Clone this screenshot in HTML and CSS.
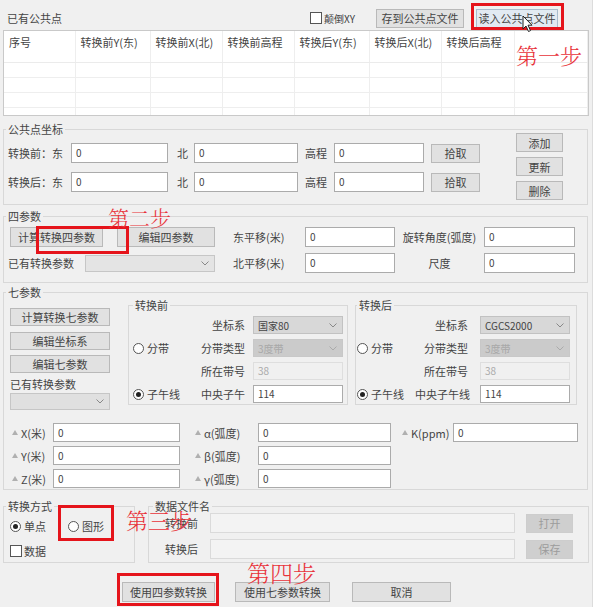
FILE: index.html
```html
<!DOCTYPE html>
<html lang="zh">
<head>
<meta charset="utf-8">
<title>坐标转换</title>
<link rel="stylesheet" href="styles.css">
</head>
<body>
<div class="dlg">
  <div class="topbar">
    <span class="ttl">已有公共点</span>
    <span class="chk"><span class="cbox"></span>颠倒XY</span>
    <span class="btn b-save">存到公共点文件</span>
    <span class="btn b-load">读入公共点文件</span>
  </div>
  <div class="tblwrap">
    <table class="pts">
      <colgroup><col class="c71"><col class="c75"><col class="c72"><col class="c72"><col class="c75"><col class="c72"><col class="c73"><col></colgroup>
      <thead><tr><th>序号</th><th>转换前Y(东)</th><th>转换前X(北)</th><th>转换前高程</th><th>转换后Y(东)</th><th>转换后X(北)</th><th>转换后高程</th><th></th></tr></thead>
      <tbody>
        <tr><td></td><td></td><td></td><td></td><td></td><td></td><td></td><td></td></tr>
        <tr><td></td><td></td><td></td><td></td><td></td><td></td><td></td><td></td></tr>
        <tr><td></td><td></td><td></td><td></td><td></td><td></td><td></td><td></td></tr>
        <tr><td></td><td></td><td></td><td></td><td></td><td></td><td></td><td></td></tr>
      </tbody>
    </table>
  </div>

  <div class="grp g1">
    <div class="gt">公共点坐标</div>
    <div class="gb gb1">
      <div class="rows">
        <div class="row">
          <span class="l1">转换前：东</span><span class="inp w97">0</span>
          <span class="l2">北</span><span class="inp w104">0</span>
          <span class="l3">高程</span><span class="inp w90">0</span>
          <span class="btn pick">拾取</span>
        </div>
        <div class="row">
          <span class="l1">转换后：东</span><span class="inp w97">0</span>
          <span class="l2">北</span><span class="inp w104">0</span>
          <span class="l3">高程</span><span class="inp w90">0</span>
          <span class="btn pick">拾取</span>
        </div>
      </div>
      <div class="rcol">
        <span class="btn sbtn">添加</span>
        <span class="btn sbtn">更新</span>
        <span class="btn sbtn">删除</span>
      </div>
    </div>
  </div>

  <div class="grp g2">
    <div class="gt">四参数</div>
    <div class="gb gb2">
      <div class="pair">
        <span class="btn calc4">计算转换四参数</span>
        <span class="btn edit4">编辑四参数</span>
      </div>
      <span class="lp">东平移(米)</span>
      <span class="inp">0</span>
      <span class="lc">旋转角度(弧度)</span>
      <span class="inp">0</span>
      <div class="pair">
        <span class="lsel">已有转换参数</span>
        <span class="sel sel4"><span></span><svg width="8" height="5" viewBox="0 0 8 5"><path d="M0.5 0.5L4 4L7.5 0.5" fill="none" stroke="#888"/></svg></span>
      </div>
      <span class="lp">北平移(米)</span>
      <span class="inp">0</span>
      <span class="lc">尺度</span>
      <span class="inp">0</span>
    </div>
  </div>

  <div class="grp g3">
    <div class="gt">七参数</div>
    <div class="gb gb3">
      <div class="top">
        <div class="lcol">
          <span class="btn b7 first">计算转换七参数</span>
          <span class="btn b7 second">编辑坐标系</span>
          <span class="btn b7 third">编辑七参数</span>
          <span class="lbl7">已有转换参数</span>
          <span class="sel sel7"><span></span><svg width="8" height="5" viewBox="0 0 8 5"><path d="M0.5 0.5L4 4L7.5 0.5" fill="none" stroke="#888"/></svg></span>
        </div>
        <div class="sub s1">
          <div class="gt">转换前</div>
          <div class="gb sb sb1">
            <span></span><span class="sl">坐标系</span>
            <span class="sel cs"><span>国家80</span><svg width="8" height="5" viewBox="0 0 8 5"><path d="M0.5 0.5L4 4L7.5 0.5" fill="none" stroke="#888"/></svg></span>
            <span class="ropt"><span class="radio"></span>分带</span><span class="sl">分带类型</span>
            <span class="sel cs dis"><span>3度带</span><svg width="8" height="5" viewBox="0 0 8 5"><path d="M0.5 0.5L4 4L7.5 0.5" fill="none" stroke="#aaa"/></svg></span>
            <span></span><span class="sl">所在带号</span>
            <span class="inp dis">38</span>
            <span class="ropt"><span class="radio on"></span>子午线</span><span class="sl">中央子午</span>
            <span class="inp">114</span>
          </div>
        </div>
        <div class="sub s2">
          <div class="gt">转换后</div>
          <div class="gb sb sb2">
            <span></span><span class="sl">坐标系</span>
            <span class="sel cs"><span>CGCS2000</span><svg width="8" height="5" viewBox="0 0 8 5"><path d="M0.5 0.5L4 4L7.5 0.5" fill="none" stroke="#888"/></svg></span>
            <span class="ropt"><span class="radio"></span>分带</span><span class="sl">分带类型</span>
            <span class="sel cs dis"><span>3度带</span><svg width="8" height="5" viewBox="0 0 8 5"><path d="M0.5 0.5L4 4L7.5 0.5" fill="none" stroke="#aaa"/></svg></span>
            <span></span><span class="sl">所在带号</span>
            <span class="inp dis">38</span>
            <span class="ropt"><span class="radio on"></span>子午线</span><span class="sl">中央子午线</span>
            <span class="inp">114</span>
          </div>
        </div>
      </div>
      <div class="prm">
        <span class="pl p1"><span class="tri"></span>X(米)</span><span class="inp">0</span>
        <span class="pl p2"><span class="tri"></span>α(弧度)</span><span class="inp">0</span>
        <span class="pl p3"><span class="tri"></span>K(ppm)</span><span class="inp">0</span>
        <span class="pl p1"><span class="tri"></span>Y(米)</span><span class="inp">0</span>
        <span class="pl p2"><span class="tri"></span>β(弧度)</span><span class="inp">0</span>
        <span></span><span></span>
        <span class="pl p1"><span class="tri"></span>Z(米)</span><span class="inp">0</span>
        <span class="pl p2"><span class="tri"></span>γ(弧度)</span><span class="inp">0</span>
        <span></span><span></span>
      </div>
    </div>
  </div>

  <div class="row4">
    <div class="grp g4a">
      <div class="gt">转换方式</div>
      <div class="gb gb4a">
        <div class="mrow">
          <span class="ropt"><span class="radio on"></span>单点</span>
          <span class="ropt r2"><span class="radio"></span>图形</span>
        </div>
        <div class="crow"><span class="cbox"></span>数据</div>
      </div>
    </div>
    <div class="grp g4b">
      <div class="gt">数据文件名</div>
      <div class="gb gb4b">
        <span class="fl">转换前</span><span class="inp dis2"></span><span></span><span class="btn dis fbtn">打开</span>
        <span class="fl">转换后</span><span class="inp dis2"></span><span></span><span class="btn dis fbtn">保存</span>
      </div>
    </div>
  </div>

  <div class="bottom">
    <span class="btn bb1">使用四参数转换</span>
    <span class="btn bb2">使用七参数转换</span>
    <span class="btn bb3">取消</span>
  </div>

  <div class="rbox r1"></div>
  <div class="rbox r2"></div>
  <div class="rbox r3"></div>
  <div class="rbox r4"></div>
  <div class="ann a1">第一步</div>
  <div class="ann a2">第二步</div>
  <div class="ann a3">第三步</div>
  <div class="ann a4">第四步</div>
  <svg class="cursor" width="12" height="18" viewBox="0 0 12 18"><path d="M1 1L1 14L4 11L6.5 16.5L8.5 15.6L6 10.2L10 10.2Z" fill="#fff" stroke="#222" stroke-width="1" stroke-linejoin="round"/></svg>
</div>
</body>
</html>
```

FILE: styles.css
```css
* { box-sizing: border-box; }
html, body { margin: 0; padding: 0; }
body {
  background: #fff;
  width: 600px;
  height: 612px;
  overflow: hidden;
  font-family: "Noto Sans CJK SC", "Microsoft YaHei", "Noto Sans", sans-serif;
  font-size: 11px;
  color: #444;
}
.dlg {
  position: relative;
  width: 593px;
  height: 607px;
  background: #f0f0f0;
  border-right: 1px solid #dcdcdc;
}

/* generic controls */
.btn {
  display: inline-flex;
  align-items: center;
  justify-content: center;
  height: 19px;
  background: #e1e1e1;
  border: 1px solid #b9b9b9;
  color: #444;
  font-size: 11px;
  white-space: nowrap;
  flex: none;
}
.btn.dis { background: #cfcfcf; border-color: #cdcdcd; color: #9c9c9c; }
.inp {
  display: block;
  height: 20px;
  background: #fff;
  border: 1px solid #ababab;
  padding: 2px 4px 0;
  font-size: 10px;
  line-height: 13px;
  color: #444;
  flex: none;
}
.inp.dis { background: #f0f0f0; border-color: #dedede; color: #aaa; }
.inp.dis2 { background: #f3f3f3; border-color: #dadada; }
.sel {
  display: flex;
  align-items: center;
  justify-content: space-between;
  height: 17px;
  padding: 0 5px 0 4px;
  background: #e4e4e4;
  border: 1px solid #c6c6c6;
  font-size: 10px;
  color: #444;
}
.radio {
  display: inline-block;
  position: relative;
  width: 11px;
  height: 11px;
  border: 1px solid #555;
  border-radius: 50%;
  background: #fff;
  flex: none;
}
.radio.on::after {
  content: "";
  position: absolute;
  left: 2px; top: 2px; right: 2px; bottom: 2px;
  border-radius: 50%;
  background: #222;
}
.cbox {
  display: inline-block;
  width: 12px;
  height: 12px;
  border: 1px solid #555;
  background: #fff;
  flex: none;
}
.ropt { display: flex; align-items: center; gap: 3px; white-space: nowrap; }

/* top bar */
.topbar {
  display: flex;
  align-items: center;
  height: 30px;
  padding-top: 6px;
}
.ttl { margin-left: 7px; }
.chk { margin-left: auto; display: flex; align-items: center; gap: 2px; font-size: 10px; }
.b-save { margin-left: 21px; width: 88px; }
.b-load { margin-left: 12px; width: 82px; margin-right: 34px; background: #e2eaf2; border-color: #a9bccd; }

/* table */
.tblwrap {
  margin-left: 3px;
  width: 586px;
  height: 86px;
  background: #fff;
  border: 1px solid #c9c9c9;
  overflow: hidden;
}
.pts { width: 100%; border-collapse: collapse; table-layout: fixed; }
.c71 { width: 71px; } .c72 { width: 72px; } .c73 { width: 73px; } .c75 { width: 75px; }
.pts th {
  height: 31px;
  padding: 3px 0 0 5px;
  text-align: left;
  vertical-align: top;
  font-weight: normal;
  font-size: 11px;
  color: #444;
  white-space: nowrap;
  overflow: hidden;
  border-right: 1px solid #eeeeee;
  border-bottom: 1px solid #ebebeb;
}
.pts td { height: 15px; padding: 0; border-right: 1px solid #eeeeee; border-bottom: 1px solid #eeeeee; }

/* group boxes */
.grp { margin-left: 3px; }
.gt {
  display: table;
  position: relative;
  margin: 0 0 -7px 3px;
  padding: 0 2px;
  line-height: 14px;
  background: #f0f0f0;
  white-space: nowrap;
}
.gb { border: 1px solid #d8d8d8; }

.g1 { margin-top: 6px; }
.gb1 { width: 585px; height: 76px; padding: 3px 24px 0 4px; display: flex; }
.rows { margin-top: 10px; display: flex; flex-direction: column; gap: 9px; }
.row { display: flex; align-items: center; height: 20px; }
.l1 { width: 63px; }
.l2 { width: 26px; padding-left: 9px; }
.l3 { width: 36px; padding-left: 7px; }
.w97 { width: 97px; } .w104 { width: 104px; } .w90 { width: 90px; }
.pick { margin-left: 7px; width: 49px; }
.rcol { margin-left: auto; display: flex; flex-direction: column; gap: 5px; }
.sbtn { width: 47px; }

.g2 { margin-top: 4px; }
.gb2 {
  width: 585px;
  height: 67px;
  padding: 10px 0 0 4px;
  display: grid;
  grid-template-columns: 207px 90px 90px 89px 91px;
  grid-template-rows: 20px 20px;
  row-gap: 6px;
  align-items: center;
}
.pair { display: flex; align-items: center; }
.calc4 { margin-left: 2px; width: 93px; height: 20px; }
.edit4 { margin-left: 14px; width: 98px; height: 20px; }
.lsel { width: 77px; }
.sel4 { width: 130px; }
.lp { padding-left: 18px; }
.lc { text-align: center; white-space: nowrap; }

.g3 { margin-top: 2px; }
.gb3 { width: 585px; height: 198px; padding: 5px 0 0 4px; }
.top { display: flex; align-items: flex-start; }
.lcol { margin: 10px 0 0 2px; width: 100px; display: flex; flex-direction: column; }
.b7 { width: 100px; height: 18px; }
.b7.second { margin-top: 6px; }
.b7.third { margin-top: 5px; }
.lbl7 { margin-top: 4px; line-height: 14px; }
.sel7 { margin-top: 2px; width: 100px; background: #e0e0e0; }
.sub.s1 { margin-left: 18px; width: 220px; }
.sub.s2 { margin-left: 7px; width: 222px; }
.s1 .gt { margin-left: 5px; }
.s2 .gt { margin-left: 2px; }
.sb {
  height: 100px;
  padding-top: 10px;
  display: grid;
  grid-template-rows: repeat(4, 18px);
  row-gap: 5px;
  align-items: center;
}
.sb1 { padding-left: 4px; grid-template-columns: 60px 60px 90px; }
.sb2 { padding-left: 1px; grid-template-columns: 58px 65px 90px; }
.sl { text-align: right; white-space: nowrap; }
.sb1 .sl { padding-right: 8px; }
.sb2 .sl { padding-right: 12px; }
.sb .inp, .sb .sel { height: 18px; }
.sb .inp { padding-top: 1px; }
.sel.cs { background: #d8d8d8; border-color: #c2c2c2; }
.sel.cs.dis { background: #cbcbcb; border-color: #c8c8c8; color: #a8a8a8; }

.prm {
  margin-top: 13px;
  display: grid;
  grid-template-columns: 45px 127px 78px 133px 62px 125px;
  grid-template-rows: repeat(3, 19px);
  row-gap: 4px;
  align-items: center;
}
.prm .inp { height: 19px; }
.pl { display: flex; align-items: center; white-space: nowrap; }
.p1 { padding-left: 4px; }
.p2 { padding-left: 15px; }
.p3 { padding-left: 11px; }
.tri {
  width: 0; height: 0;
  border-left: 3px solid transparent;
  border-right: 3px solid transparent;
  border-bottom: 5px solid #b0b0b0;
  margin-right: 3px;
}

.row4 { display: flex; margin-top: 9px; margin-left: 3px; }
.row4 .g4a { margin-left: 0; width: 132px; }
.row4 .g4b { margin-left: 13px; width: 441px; }
.g4b .gt { margin-left: 5px; }
.gb4a { height: 57px; padding: 12px 0 0 6px; }
.mrow { display: flex; align-items: center; height: 14px; }
.r2 { margin-left: 22px; }
.crow { display: flex; align-items: center; gap: 2px; height: 14px; margin-top: 11px; }
.gb4b {
  height: 57px;
  padding: 6px 0 0 16px;
  display: grid;
  grid-template-columns: 45px 305px 11px 47px;
  grid-template-rows: 20px 20px;
  row-gap: 6px;
  align-items: center;
}
.fbtn { width: 47px; }

.bottom { display: flex; margin-top: 19px; padding-left: 122px; }
.bottom .btn { height: 20px; }
.bb1 { width: 93px; }
.bb2 { margin-left: 20px; width: 95px; }
.bb3 { margin-left: 22px; width: 99px; }

/* annotations drawn over the screenshot */
.rbox { position: absolute; border: 3px solid #e5141b; }
.rbox.r1 { left: 471px; top: 3px; width: 93px; height: 27px; }
.rbox.r2 { left: 14px; top: 226px; width: 93px; height: 28px; }
.rbox.r3 { left: 58px; top: 505px; width: 56px; height: 36px; }
.rbox.r4 { left: 117px; top: 573px; width: 102px; height: 33px; }
.ann {
  position: absolute;
  color: #e8333a;
  font-family: "Noto Serif CJK SC", "Noto Sans CJK SC", serif;
  font-weight: 300;
  line-height: 1;
  white-space: nowrap;
}
.a1 { left: 516px; top: 44px; font-size: 22px; }
.a2 { left: 108px; top: 207px; font-size: 21px; }
.a3 { left: 126px; top: 509px; font-size: 22px; }
.a4 { left: 247px; top: 561px; font-size: 23px; }
.cursor { position: absolute; left: 522px; top: 15px; }
```
